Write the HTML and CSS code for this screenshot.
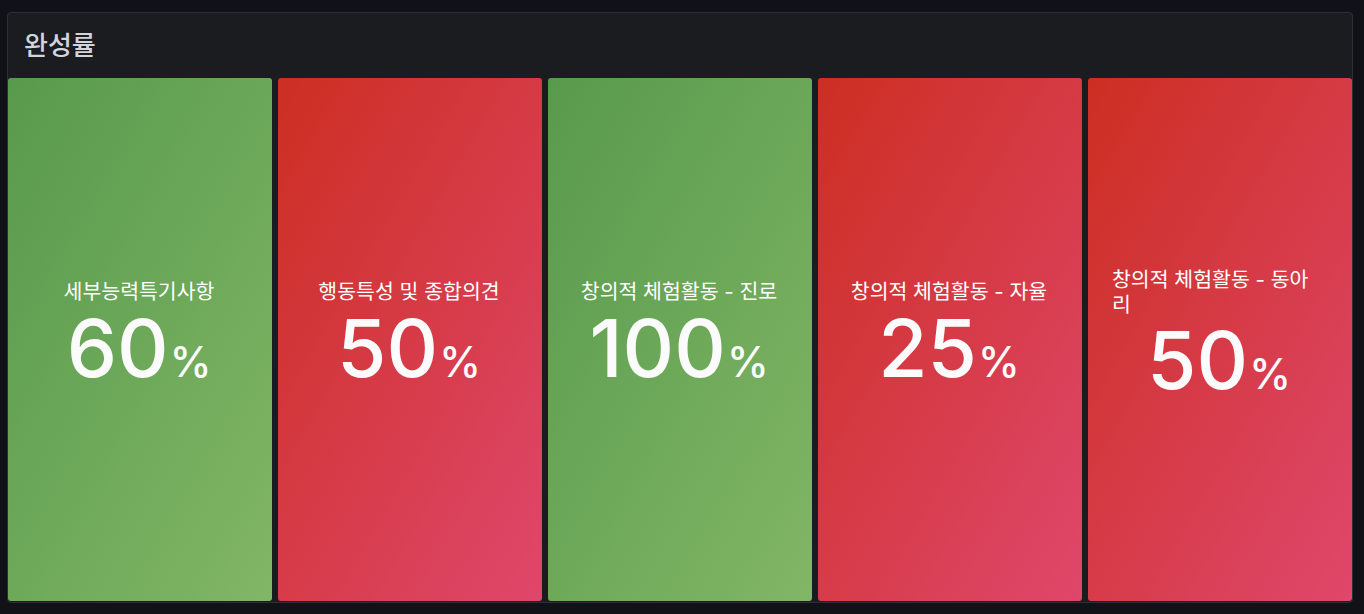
FILE: index.html
```html
<!DOCTYPE html>
<html lang="ko">
<head>
<meta charset="utf-8">
<title>완성률</title>
<link rel="stylesheet" href="styles.css">
</head>
<body>
<div class="panel">
  <div class="panel-header"><h2 class="panel-title">완성률</h2></div>
  <div class="stats">
    <div class="stat stat-green">
      <div class="stat-inner">
        <div class="label-wrap"><span class="label">세부능력특기사항</span></div>
        <div class="value">60<span class="unit">%</span></div>
      </div>
    </div>
    <div class="stat stat-red">
      <div class="stat-inner">
        <div class="label-wrap"><span class="label">행동특성 및 종합의견</span></div>
        <div class="value">50<span class="unit">%</span></div>
      </div>
    </div>
    <div class="stat stat-green">
      <div class="stat-inner">
        <div class="label-wrap"><span class="label">창의적 체험활동 - 진로</span></div>
        <div class="value">100<span class="unit">%</span></div>
      </div>
    </div>
    <div class="stat stat-red">
      <div class="stat-inner">
        <div class="label-wrap"><span class="label">창의적 체험활동 - 자율</span></div>
        <div class="value">25<span class="unit">%</span></div>
      </div>
    </div>
    <div class="stat stat-red">
      <div class="stat-inner">
        <div class="label-wrap"><span class="label">창의적 체험활동 - 동아리</span></div>
        <div class="value">50<span class="unit">%</span></div>
      </div>
    </div>
  </div>
</div>
</body>
</html>
```
FILE: styles.css
```css
* { box-sizing: border-box; }
html, body {
  margin: 0;
  padding: 0;
  background: #111217;
}
body {
  padding: 12px 11px 0 7px;
  font-family: Inter, "Noto Sans CJK KR", sans-serif;
  height: 614px;
  overflow: hidden;
}
.panel {
  width: 1346px;
  height: 591px;
  background: #1b1c20;
  border: 1px solid #2d2f34;
  border-radius: 4px;
  display: flex;
  flex-direction: column;
  padding-bottom: 1px;
}
.panel-header {
  height: 65px;
  flex: none;
  display: flex;
  align-items: center;
  padding: 0 0 4px 16px;
}
.panel-title {
  margin: 0;
  font-family: "Noto Sans CJK KR", sans-serif;
  font-size: 26px;
  font-weight: 500;
  color: #d3d4dc;
}
.stats {
  flex: 1;
  display: grid;
  grid-template-columns: repeat(5, 1fr);
  gap: 6px;
}
.stat {
  border-radius: 3px;
  display: flex;
  align-items: center;
  justify-content: center;
  padding: 0 26px 0 24px;
  color: #ffffff;
}
.stat-green {
  background: linear-gradient(120deg, #589a4d 0%, #81b665 100%);
}
.stat-red {
  background: linear-gradient(120deg, #cd2e22 0%, #df476b 100%);
}
.stat-inner {
  width: 100%;
  display: flex;
  flex-direction: column;
  align-items: center;
  padding-bottom: 16px;
}
.label-wrap {
  width: 100%;
  display: flex;
  justify-content: center;
}
.label {
  text-align: left;
  font-size: 20.5px;
  line-height: 1.2;
  font-weight: 400;
  color: #ffffff;
}
.value {
  font-family: Inter, sans-serif;
  font-size: 80px;
  font-weight: 500;
  line-height: 0.86;
  margin-top: 9px;
  color: #fbfbfc;
}
.unit {
  font-size: 42px;
  margin-left: 1px;
}
```
